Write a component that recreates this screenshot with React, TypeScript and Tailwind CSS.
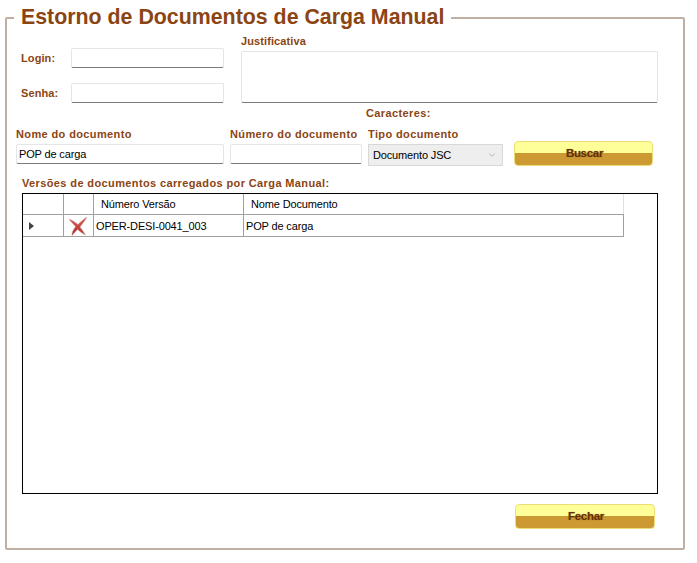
import { ChevronDown } from "lucide-react";

const labelBase = "block text-[11px] font-bold leading-[14px] text-[#8b4513]";
const labelClass = `${labelBase} tracking-[0.38px]`;
const inputClass =
  "h-[20px] rounded-[2px] border border-[#e6e6e6] border-b-[#7a7a7a] bg-white px-[2px] text-[11px] leading-[18px] tracking-[-0.15px] text-black outline-none";

function GlossButton({ label, className }: { label: string; className: string }) {
  return (
    <button
      className={`flex items-center justify-center rounded-[4px] border border-[#eedd77] bg-[linear-gradient(#ffff99_0,#ffff99_50%,#cc9933_50%,#cc9933_100%)] pl-[2px] text-[11.5px] font-bold tracking-[-0.3px] text-[#663300] [text-shadow:0_0_1px_#996633] ${className}`}
    >
      {label}
    </button>
  );
}

function RemoveIcon() {
  return (
    <svg width="20" height="20" viewBox="0 0 20 20">
      <defs>
        <linearGradient id="removeFill" x1="0" y1="0" x2="0" y2="1">
          <stop offset="0" stopColor="#e0605a" />
          <stop offset="1" stopColor="#b52a25" />
        </linearGradient>
      </defs>
      <path
        d="M1 3.5 C3 3 6 5.5 10 8.5 C13 5.5 16 2.5 19 1 C17 5 14 8 12 11 C14 14 16 16 17.5 19 C14.5 17.5 12 15.5 9.5 13.5 C7.5 15.5 6 17.5 4 19.5 C3.5 16.5 5.5 13.5 7.5 10.5 C5.5 8 3 6 1 3.5Z"
        fill="url(#removeFill)"
        stroke="#b9a9a4"
        strokeWidth="0.5"
      />
    </svg>
  );
}

export default function App() {
  return (
    <div className="h-[563px] w-[697px] bg-white px-[5px] pt-[5px] font-['Liberation_Sans',Arial,sans-serif]">
      <fieldset className="h-[545px] w-[680px] rounded-[2px] border-2 border-[#bfb0a3] pl-[9px]">
        <legend className="ml-[-2px] px-[7px] text-[21.35px] font-bold leading-[25px] text-[#8b4513]">
          Estorno de Documentos de Carga Manual
        </legend>

        <div className="flex">
          <div className="mt-[18px] flex w-[226px] flex-col gap-[15px]">
            <div className="flex items-center">
              <label className={`${labelBase} ml-[5px] w-[50px] tracking-[0.1px]`}>Login:</label>
              <input className={`${inputClass} w-[153px]`} />
            </div>
            <div className="flex items-center">
              <label className={`${labelBase} ml-[5px] w-[50px] tracking-[0.1px]`}>Senha:</label>
              <input className={`${inputClass} w-[153px]`} />
            </div>
          </div>
          <div className="ml-[-1px] mt-[4px]">
            <label className={`${labelBase} tracking-[0.1px]`}>Justificativa</label>
            <textarea className="mt-[3px] block h-[52px] w-[417px] resize-none rounded-[2px] border border-[#e6e6e6] border-b-[#7a7a7a] bg-white outline-none" />
            <label className={`${labelClass} ml-[125px] mt-[3px]`}>Caracteres:</label>
          </div>
        </div>

        <div className="mt-[7px] flex">
          <div className="w-[214px]">
            <label className={labelClass}>Nome do documento</label>
            <input className={`${inputClass} mt-[3px] w-[208px]`} defaultValue="POP de carga" />
          </div>
          <div className="w-[138px]">
            <label className={labelClass}>Número do documento</label>
            <input className={`${inputClass} mt-[3px] w-[132px]`} />
          </div>
          <div className="w-[146px]">
            <label className={labelClass}>Tipo documento</label>
            <div className="mt-[3px] flex h-[22px] w-[135px] items-center justify-between border border-[#d8d8d8] bg-[#eeeeee] pl-[4px] pr-[5px] text-[11px] tracking-[-0.15px] text-black">
              Documento JSC
              <ChevronDown size={10} className="text-[#aaaaaa]" />
            </div>
          </div>
          <GlossButton label="Buscar" className="mt-[14px] h-[25px] w-[139px]" />
        </div>

        <label className={`${labelClass} ml-[6px] mt-[10px]`}>Versões de documentos carregados por Carga Manual:</label>

        <div className="ml-[6px] mt-[3px] h-[301px] w-[636px] border-[1.5px] border-black bg-white">
          <div className="w-[601px] text-[11px] leading-[20px] tracking-[-0.15px] text-black">
            <div className="flex h-[21px] border-b border-[#a0a0a0]">
              <div className="w-[41px] border-r border-[#a0a0a0]" />
              <div className="w-[30px] border-r border-[#a0a0a0]" />
              <div className="w-[150px] border-r border-[#a0a0a0] pl-[7px]">Número Versão</div>
              <div className="flex-1 border-r border-[#e0e0e0] pl-[7px]">Nome Documento</div>
            </div>
            <div className="flex h-[22px] border-b border-[#a0a0a0] leading-[22px]">
              <div className="flex w-[41px] items-center border-r border-[#a0a0a0] pl-[6px]">
                <span className="border-y-[4.5px] border-l-[5px] border-y-transparent border-l-[#444444]" />
              </div>
              <div className="flex w-[30px] items-center border-r border-[#a0a0a0] pl-[4px]">
                <RemoveIcon />
              </div>
              <div className="w-[150px] border-r border-[#a0a0a0] pl-[2px]">OPER-DESI-0041_003</div>
              <div className="flex-1 border-r border-[#a0a0a0] pl-[2px]">POP de carga</div>
            </div>
          </div>
        </div>

        <div className="mt-[10px] flex">
          <GlossButton label="Fechar" className="ml-[499px] h-[25px] w-[140px]" />
        </div>
      </fieldset>
    </div>
  );
}
